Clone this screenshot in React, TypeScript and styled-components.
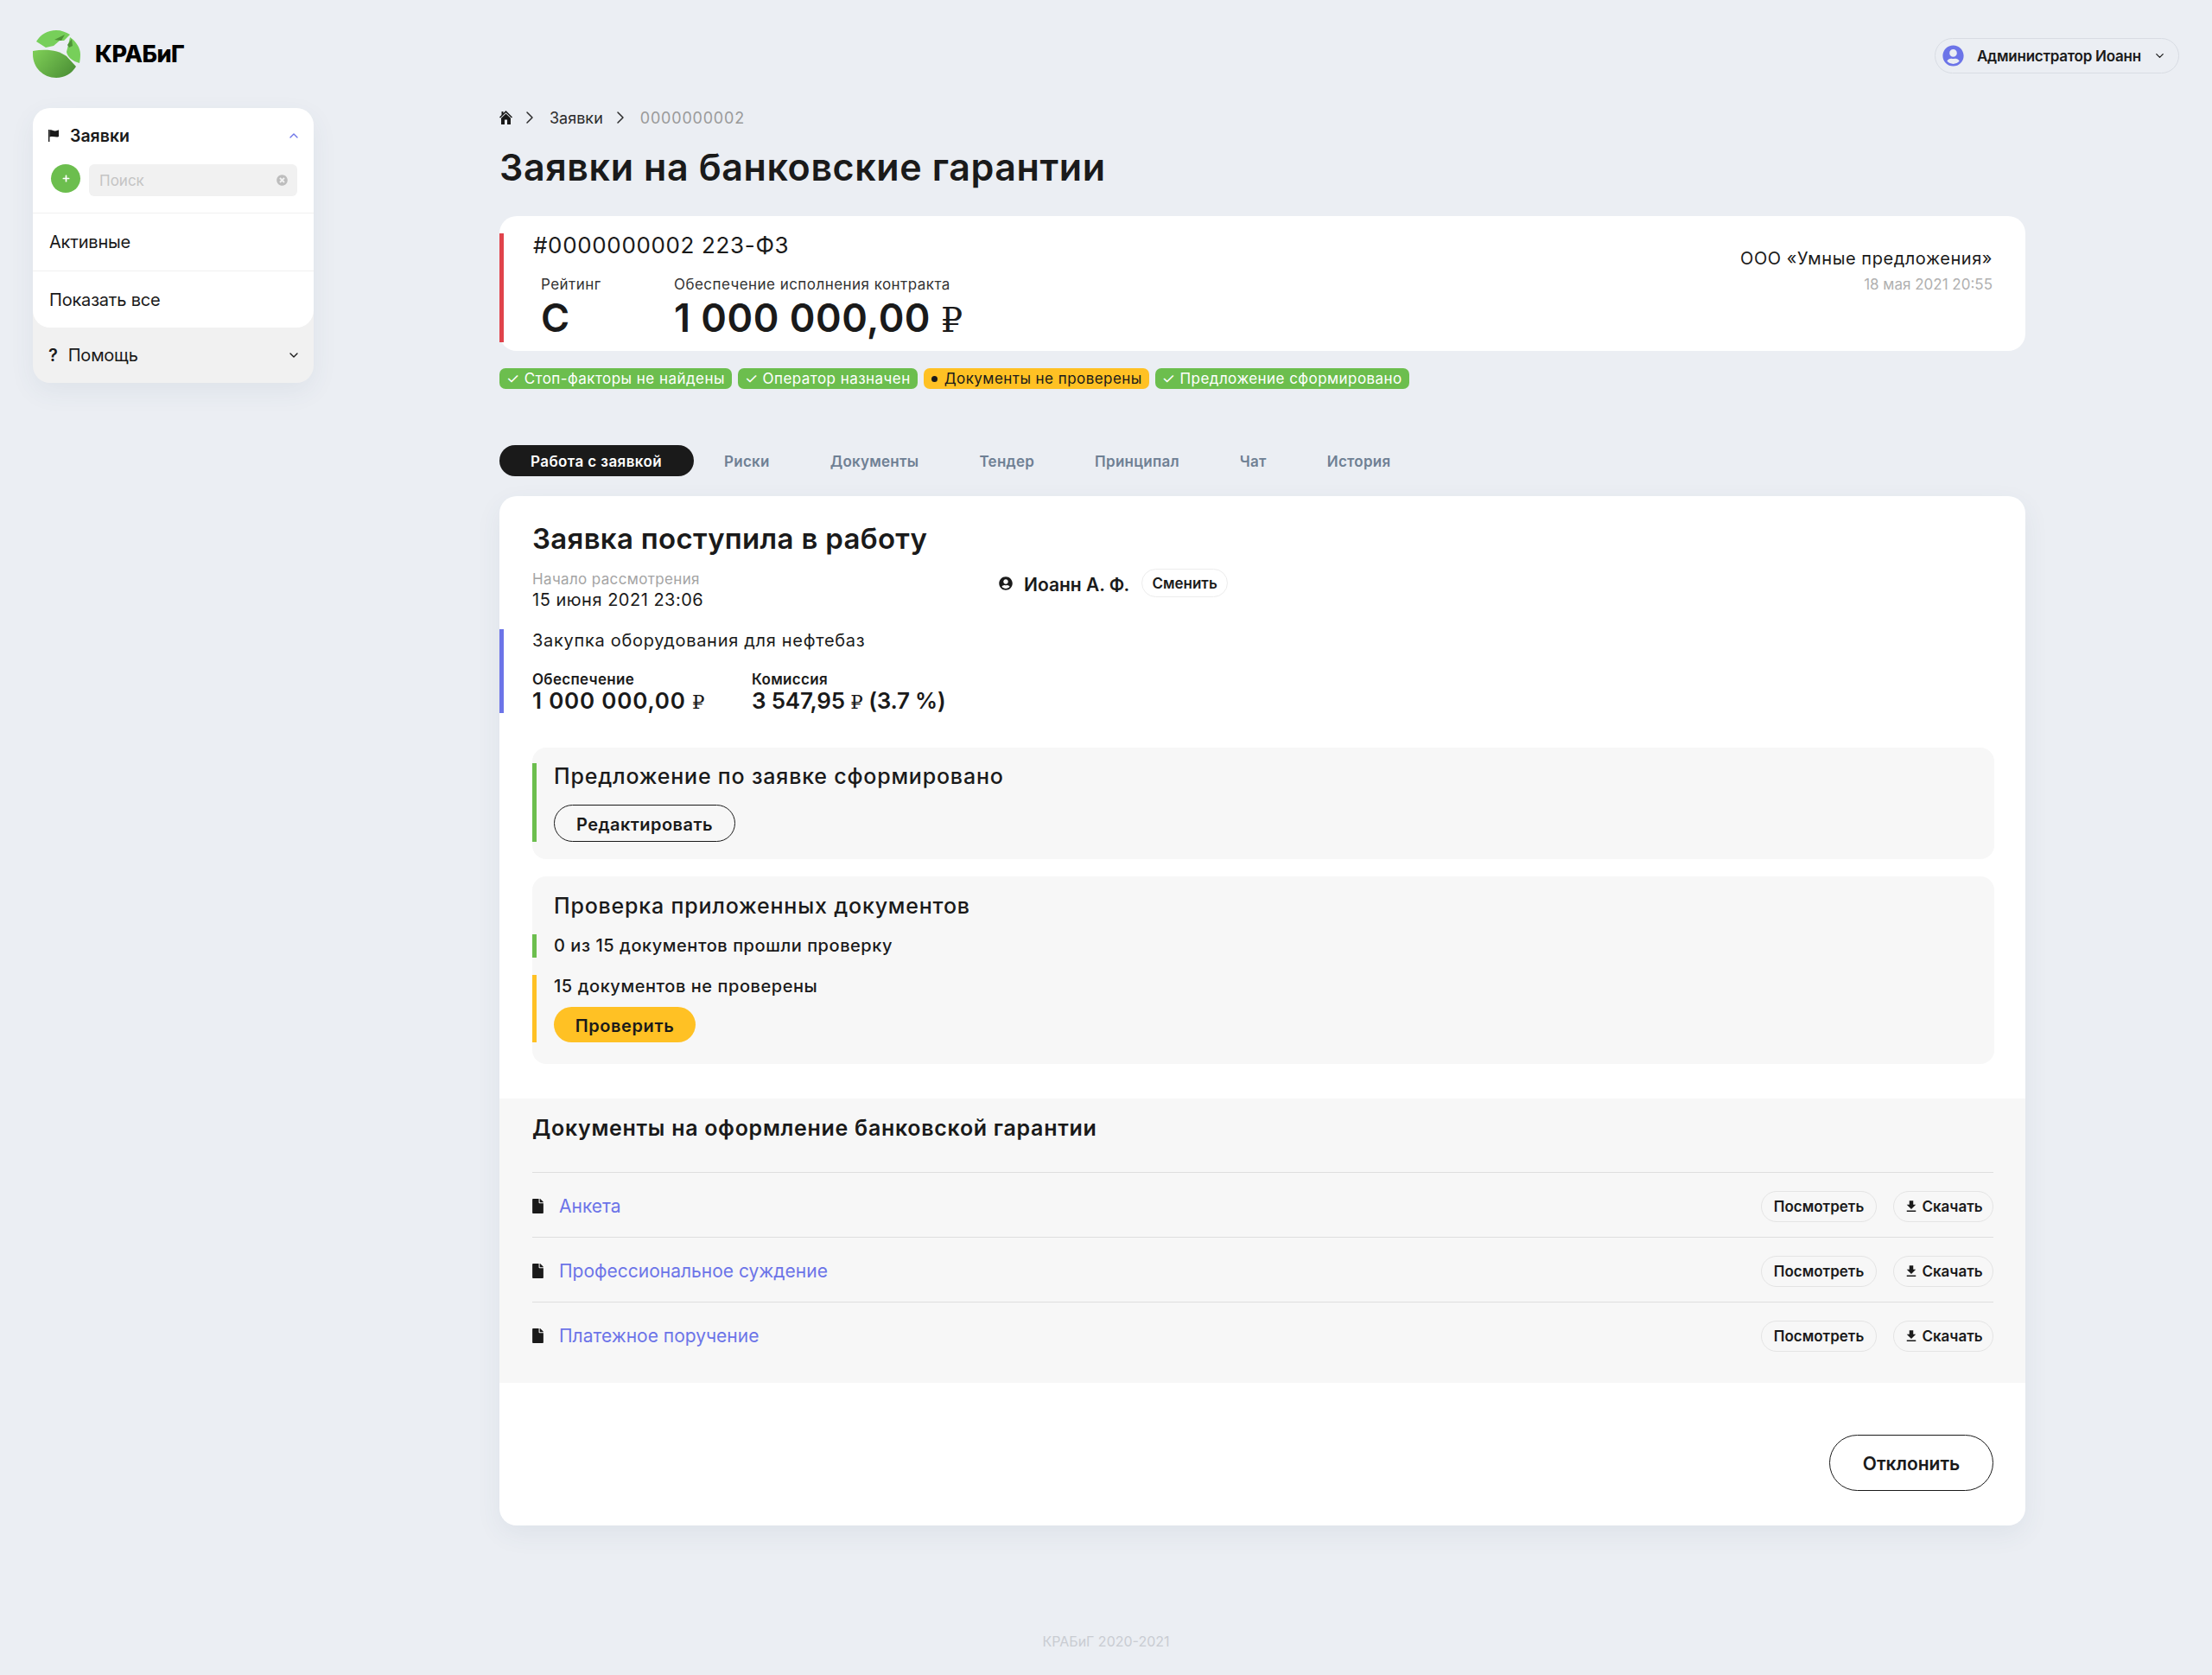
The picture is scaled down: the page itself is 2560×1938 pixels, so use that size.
import React from 'react';
import styled, { createGlobalStyle } from 'styled-components';
import { ChevronDown, ChevronRight, ChevronUp } from 'lucide-react';
import { FaFile, FaPlus, FaTimesCircle, FaUserCircle } from 'react-icons/fa';
import { MdFileDownload } from 'react-icons/md';

const Global = createGlobalStyle`
  html, body { margin: 0; padding: 0; background: #ebeef3; }
  body { font-family: Inter, "Noto Sans", sans-serif; color: #1a1a1a; }
  * { box-sizing: border-box; }
`;

const Page = styled.div`
  width: 2560px;
  height: 1938px;
  overflow: hidden;
`;
const TopBar = styled.header`
  height: 125px;
  padding: 35px 38px 0;
  display: flex;
  justify-content: space-between;
  align-items: flex-start;
`;
const Brand = styled.div`
  display: flex;
  align-items: center;
  gap: 17px;
  height: 55px;
`;
const BrandName = styled.span`
  font-size: 27px;
  font-weight: 800;
  color: #000;
  letter-spacing: -0.5px;
  margin-top: -1px;
`;
const UserPill = styled.div`
  margin-top: 9px;
  width: 283px;
  height: 41px;
  border: 1px solid #d8dce3;
  border-radius: 21px;
  display: flex;
  align-items: center;
  padding-left: 8px;
  font-size: 17px;
  font-weight: 600;
  letter-spacing: -0.25px;
  color: #1a1a1a;
  white-space: nowrap;
  svg:first-child { color: #6c74e8; margin-right: 15px; }
  svg:last-child { margin-left: 14px; }
`;
const Body = styled.div`
  display: flex;
  padding-left: 38px;
`;
const Sidebar = styled.aside`
  width: 325px;
  height: 318px;
  margin-right: 215px;
  border-radius: 20px;
  background: #f1f1f1;
  box-shadow: 0 10px 30px rgba(60, 80, 110, 0.07);
  flex-shrink: 0;
`;
const SideTop = styled.div`
  height: 254px;
  background: #fff;
  border-radius: 20px;
`;
const SideHead = styled.div`
  height: 64px;
  margin-bottom: 1px;
  padding: 0 15px 0 18px;
  display: flex;
  align-items: center;
  font-size: 19.5px;
  font-weight: 600;
  svg:first-child { margin-right: 13px; }
  span { flex: 1; }
  svg:last-child { color: #6c74e8; }
`;
const SearchRow = styled.div`
  display: flex;
  gap: 10px;
  padding: 0 19px 0 21px;
  height: 56px;
  align-items: flex-start;
`;
const AddButton = styled.div`
  width: 34px;
  height: 33px;
  border-radius: 50%;
  background: #6cbe4e;
  color: #fff;
  display: flex;
  align-items: center;
  justify-content: center;
`;
const Search = styled.div`
  width: 241px;
  height: 37px;
  border-radius: 6px;
  background: #f1f1f1;
  color: #c4c4c4;
  font-size: 17px;
  padding: 0 11px 0 12px;
  display: flex;
  align-items: center;
  justify-content: space-between;
  svg { color: #bdbdbd; }
`;
const SideItem = styled.div`
  height: 67px;
  border-top: 1px solid #f1f1f1;
  padding-left: 19px;
  display: flex;
  align-items: center;
  font-size: 20px;
  letter-spacing: -0.2px;
`;
const HelpRow = styled.div`
  height: 64px;
  padding: 0 15px 0 18px;
  display: flex;
  align-items: center;
  font-size: 20px;
  letter-spacing: -0.2px;
  b { font-weight: 600; margin-right: 12px; }
  span { flex: 1; }
`;
const Main = styled.main`
  width: 1766px;
`;
const Crumbs = styled.nav`
  height: 22px;
  display: flex;
  align-items: center;
  font-size: 18px;
  color: #2b2b2b;
  svg { flex-shrink: 0; }
`;
const CrumbSep = styled(ChevronRight)`
  margin: 0 11px 0 8px;
`;
const CrumbLast = styled.span`
  color: #9a9a9a;
  letter-spacing: 0.8px;
`;
const PageTitle = styled.h1`
  margin: 21px 0 0;
  font-size: 43px;
  line-height: 50px;
  font-weight: 600;
  letter-spacing: 0.6px;
  color: #1a1a1a;
`;
const OrderCard = styled.section`
  margin-top: 32px;
  height: 156px;
  background: #fff;
  border-radius: 20px;
  padding: 20px 38px 10px 0;
  display: flex;
  justify-content: space-between;
`;
const OrderLeft = styled.div`
  border-left: 5px solid #e0434b;
  height: 126px;
  padding-left: 34px;
`;
const OrderNo = styled.div`
  font-size: 26px;
  line-height: 28px;
  letter-spacing: 0.65px;
`;
const OrderStats = styled.div`
  display: flex;
  margin-top: 19px;
  padding-left: 9px;
`;
const Stat = styled.div<{ $w?: number }>`
  width: ${p => (p.$w ? `${p.$w}px` : 'auto')};
`;
const StatLabel = styled.div`
  font-size: 17px;
  line-height: 24px;
  letter-spacing: 0.45px;
  color: #333;
`;
const StatValue = styled.div`
  font-size: 45px;
  line-height: 54px;
  font-weight: 600;
  letter-spacing: 0.5px;
`;
const Ruble = styled.span`
  font-family: "Liberation Serif", "DejaVu Serif", serif;
  font-weight: 400;
  font-size: 0.88em;
  letter-spacing: 0;
`;
const OrderRight = styled.div`
  text-align: right;
  padding-top: 15px;
`;
const OrgName = styled.div`
  font-size: 20px;
  line-height: 28px;
  letter-spacing: 0.55px;
`;
const OrgDate = styled.div`
  font-size: 17px;
  line-height: 26px;
  color: #b0b0b0;
  margin-top: 3px;
`;
const Chips = styled.div`
  margin-top: 20px;
  display: flex;
  gap: 7px;
`;
const Chip = styled.span<{ $warn?: boolean }>`
  height: 24px;
  border-radius: 7px;
  padding: 0 8px;
  display: inline-flex;
  align-items: center;
  gap: 5px;
  font-size: 17px;
  letter-spacing: 0.45px;
  white-space: nowrap;
  color: ${p => (p.$warn ? '#1a1a1a' : '#fff')};
  background: ${p => (p.$warn ? '#ffc124' : '#6cbe4e')};
`;
const ChipDot = styled.span`
  width: 7px;
  height: 7px;
  border-radius: 50%;
  background: #1a1a1a;
  margin: 1px 3px 0 1px;
`;
const Tabs = styled.div`
  margin-top: 65px;
  height: 36px;
  display: flex;
  align-items: center;
`;
const Tab = styled.div<{ $active?: boolean }>`
  height: 36px;
  padding: ${p => (p.$active ? '1px 37px 0 36px' : '1px 35px 0')};
  border-radius: 18px;
  display: flex;
  align-items: center;
  font-size: 17px;
  font-weight: 600;
  letter-spacing: ${p => (p.$active ? '0.4px' : '0.25px')};
  color: ${p => (p.$active ? '#fff' : '#6f8094')};
  background: ${p => (p.$active ? '#1a1a1a' : 'transparent')};
`;
const WorkCard = styled.section`
  margin-top: 23px;
  height: 1191px;
  background: #fff;
  border-radius: 20px;
  box-shadow: 0 10px 30px rgba(60, 80, 110, 0.07);
  padding-top: 29px;
`;
const WorkTitle = styled.h2`
  margin: 0 0 0 38px;
  font-size: 33px;
  line-height: 40px;
  font-weight: 600;
  letter-spacing: 0.3px;
`;
const MetaRow = styled.div`
  margin: 16px 0 0 38px;
  display: flex;
  height: 47px;
`;
const MetaCol = styled.div`
  width: 540px;
`;
const MetaLabel = styled.div`
  font-size: 17px;
  line-height: 22px;
  letter-spacing: 0.35px;
  color: #a4a4a4;
`;
const MetaValue = styled.div`
  font-size: 20px;
  line-height: 26px;
  letter-spacing: 0.5px;
`;
const Assignee = styled.div`
  display: flex;
  align-items: center;
  height: 33px;
  margin-top: -1px;
  font-size: 21px;
  font-weight: 600;
  svg { margin-right: 13px; margin-top: 1px; }
`;
const AssigneeName = styled.span`
  margin-top: 3px;
`;
const SmallButton = styled.button`
  margin-left: 14px;
  height: 33px;
  width: 100px;
  padding: 0;
  border: 1px solid #ececec;
  border-radius: 17px;
  background: #fff;
  color: #1a1a1a;
  font: 600 17px Inter, sans-serif;
`;
const Purpose = styled.div`
  margin-top: 22px;
  height: 97px;
  border-left: 5px solid #6c74e8;
  padding-left: 33px;
`;
const PurposeText = styled.div`
  font-size: 20px;
  line-height: 27px;
  letter-spacing: 0.7px;
`;
const Figures = styled.div`
  display: flex;
  margin-top: 21px;
`;
const Figure = styled.div<{ $w?: number }>`
  width: ${p => (p.$w ? `${p.$w}px` : 'auto')};
`;
const FigureLabel = styled.div`
  font-size: 17px;
  line-height: 20px;
  font-weight: 600;
  letter-spacing: 0.3px;
`;
const FigureValue = styled.div<{ $tight?: boolean }>`
  font-size: 26px;
  line-height: 28px;
  font-weight: 600;
  letter-spacing: ${p => (p.$tight ? '-0.2px' : '0.8px')};
  margin-top: 1px;
`;
const Panel = styled.div<{ $h: number; $top: number; $pad?: number }>`
  margin: ${p => p.$top}px 36px 0 38px;
  height: ${p => p.$h}px;
  background: #f7f7f7;
  border-radius: 16px;
  padding-top: ${p => p.$pad ?? 0}px;
`;
const Marked = styled.div<{ $color: string; $top: number; $h: number }>`
  margin-top: ${p => p.$top}px;
  height: ${p => p.$h}px;
  border-left: 5px solid ${p => p.$color};
  padding-left: 20px;
`;
const PanelTitle = styled.div`
  font-size: 25px;
  line-height: 30px;
  font-weight: 500;
  letter-spacing: 0.8px;
`;
const PlainTitle = styled(PanelTitle)`
  padding-left: 25px;
`;
const PanelLine = styled.div`
  font-size: 20px;
  line-height: 27px;
  font-weight: 500;
  letter-spacing: 0.55px;
`;
const OutlineButton = styled.button`
  display: block;
  margin-top: 18px;
  width: 210px;
  height: 43px;
  padding: 2px 0 0;
  border: 1px solid #1a1a1a;
  border-radius: 22px;
  background: transparent;
  color: #1a1a1a;
  font: 600 20px Inter, sans-serif;
  letter-spacing: 0.45px;
`;
const YellowButton = styled.button`
  display: block;
  margin-top: 10px;
  width: 164px;
  height: 41px;
  padding: 2px 0 0;
  border: none;
  border-radius: 21px;
  background: #ffc124;
  color: #1a1a1a;
  font: 600 20px Inter, sans-serif;
  letter-spacing: 0.6px;
`;
const DocsBlock = styled.div`
  margin-top: 40px;
  height: 329px;
  background: #f7f7f7;
  padding: 16px 37px 0 38px;
`;
const DocsTitle = styled.div`
  font-size: 25px;
  line-height: 36px;
  font-weight: 600;
  letter-spacing: 0.7px;
`;
const DocList = styled.div`
  margin-top: 33px;
`;
const DocRow = styled.div`
  height: 75px;
  border-top: 1px solid #dedede;
  padding-top: 3px;
  display: flex;
  align-items: center;
`;
const DocIcon = styled(FaFile)`
  width: 13px;
  height: 17px;
  margin-top: -1px;
`;
const DocLink = styled.a`
  flex: 1;
  margin-left: 18px;
  font-size: 21px;
  color: #6c74e8;
`;
const PillButton = styled.button<{ $w: number }>`
  width: ${p => p.$w}px;
  height: 36px;
  margin-left: 19px;
  padding: 0;
  border: 1px solid #e4e4e4;
  border-radius: 18px;
  background: transparent;
  color: #1a1a1a;
  font: 600 17px Inter, sans-serif;
  display: inline-flex;
  align-items: center;
  justify-content: center;
  gap: 3px;
`;
const CardActions = styled.div`
  margin: 60px 37px 0 0;
  display: flex;
  justify-content: flex-end;
`;
const DeclineButton = styled.button`
  width: 190px;
  height: 65px;
  padding: 2px 0 0;
  border: 1px solid #1a1a1a;
  border-radius: 33px;
  background: #fff;
  color: #1a1a1a;
  font: 600 21px Inter, sans-serif;
`;
const Footer = styled.footer`
  margin-top: 124px;
  text-align: center;
  font-size: 16px;
  line-height: 20px;
  color: #c9ccd2;
`;

function Logo() {
  return (
    <svg width="55" height="55" viewBox="0 0 55 55">
      <defs>
        <linearGradient id="leaf" x1="0" y1="0.2" x2="1" y2="0.8">
          <stop offset="0" stopColor="#7ccb55" />
          <stop offset="1" stopColor="#4b8f35" />
        </linearGradient>
      </defs>
      <path d="M4 13C9 5 17 0 27 0C33 0 38 2 43 5L36 12L31 12L24 18L15 20Z" fill="#77cf5a" />
      <path d="M43 8C50 13 55 20 55 28C55 32 54.500 35 54 38C46 36 40 31 39 25L41 17Z" fill="#77cf5a" />
      <path d="M0 24C15 21 30 23 39 30L50 42C45 50 37 55 27 55C12 55 0 43 0 28Z" fill="url(#leaf)" />
      <path d="M25 11L37 5L33 12Z" fill="#4f9338" />
      <path d="M40 17L45 10L46 18L42 20Z" fill="#4f9338" />
    </svg>
  );
}

function FlagIcon() {
  return (
    <svg width="12" height="14" viewBox="0 0 12 14" fill="#1a1a1a">
      <rect x="0" y="0" width="1.400" height="14" />
      <path d="M1.400 0.500C4 -0.500 6 2 8 1.500C9.500 1.200 11 0.500 12 0.500V8C9 9.500 6 7 1.400 8.500Z" />
    </svg>
  );
}

function HomeIcon() {
  return (
    <svg width="15" height="16" viewBox="0 0 15 16" fill="#1a1a1a">
      <path d="M7.500 0L15 7.500L14 8.500L7.500 2.200L1 8.500L0 7.500L2.500 5V1H4.500V3Z" />
      <path d="M7.500 3.600L13 8.800V16H9V10.500H6V16H2V8.800Z" />
    </svg>
  );
}

const docs = ['Анкета', 'Профессиональное суждение', 'Платежное поручение'];
const tabs = ['Работа с заявкой', 'Риски', 'Документы', 'Тендер', 'Принципал', 'Чат', 'История'];

export default function App() {
  return (
    <Page>
      <Global />
      <TopBar>
        <Brand>
          <Logo />
          <BrandName>КРАБиГ</BrandName>
        </Brand>
        <UserPill>
          <FaUserCircle size={25} />
          Администратор Иоанн
          <ChevronDown size={15} />
        </UserPill>
      </TopBar>
      <Body>
        <Sidebar>
          <SideTop>
            <SideHead>
              <FlagIcon />
              <span>Заявки</span>
              <ChevronUp size={16} />
            </SideHead>
            <SearchRow>
              <AddButton><FaPlus size={9} /></AddButton>
              <Search>Поиск<FaTimesCircle size={13} /></Search>
            </SearchRow>
            <SideItem>Активные</SideItem>
            <SideItem>Показать все</SideItem>
          </SideTop>
          <HelpRow>
            <b>?</b>
            <span>Помощь</span>
            <ChevronDown size={16} />
          </HelpRow>
        </Sidebar>
        <Main>
          <Crumbs>
            <HomeIcon />
            <CrumbSep size={24} strokeWidth={1.5} />
            Заявки
            <CrumbSep size={24} strokeWidth={1.5} />
            <CrumbLast>0000000002</CrumbLast>
          </Crumbs>
          <PageTitle>Заявки на банковские гарантии</PageTitle>
          <OrderCard>
            <OrderLeft>
              <OrderNo>#0000000002 223-ФЗ</OrderNo>
              <OrderStats>
                <Stat $w={154}>
                  <StatLabel>Рейтинг</StatLabel>
                  <StatValue>C</StatValue>
                </Stat>
                <Stat>
                  <StatLabel>Обеспечение исполнения контракта</StatLabel>
                  <StatValue>1 000 000,00 <Ruble>₽</Ruble></StatValue>
                </Stat>
              </OrderStats>
            </OrderLeft>
            <OrderRight>
              <OrgName>ООО «Умные предложения»</OrgName>
              <OrgDate>18 мая 2021 20:55</OrgDate>
            </OrderRight>
          </OrderCard>
          <Chips>
            <Chip>✓ Стоп-факторы не найдены</Chip>
            <Chip>✓ Оператор назначен</Chip>
            <Chip $warn><ChipDot />Документы не проверены</Chip>
            <Chip>✓ Предложение сформировано</Chip>
          </Chips>
          <Tabs>
            {tabs.map((t, i) => <Tab key={t} $active={i === 0}>{t}</Tab>)}
          </Tabs>
          <WorkCard>
            <WorkTitle>Заявка поступила в работу</WorkTitle>
            <MetaRow>
              <MetaCol>
                <MetaLabel>Начало рассмотрения</MetaLabel>
                <MetaValue>15 июня 2021 23:06</MetaValue>
              </MetaCol>
              <Assignee>
                <FaUserCircle size={16} />
                <AssigneeName>Иоанн А. Ф.</AssigneeName>
                <SmallButton>Сменить</SmallButton>
              </Assignee>
            </MetaRow>
            <Purpose>
              <PurposeText>Закупка оборудования для нефтебаз</PurposeText>
              <Figures>
                <Figure $w={254}>
                  <FigureLabel>Обеспечение</FigureLabel>
                  <FigureValue>1 000 000,00 <Ruble>₽</Ruble></FigureValue>
                </Figure>
                <Figure>
                  <FigureLabel>Комиссия</FigureLabel>
                  <FigureValue $tight>3 547,95 <Ruble>₽</Ruble> (3.7 %)</FigureValue>
                </Figure>
              </Figures>
            </Purpose>
            <Panel $top={40} $h={129} $pad={18}>
              <Marked $color="#6cbe4e" $top={0} $h={91}>
                <PanelTitle>Предложение по заявке сформировано</PanelTitle>
                <OutlineButton>Редактировать</OutlineButton>
              </Marked>
            </Panel>
            <Panel $top={20} $h={217} $pad={19}>
              <PlainTitle>Проверка приложенных документов</PlainTitle>
              <Marked $color="#6cbe4e" $top={18} $h={27}>
                <PanelLine>0 из 15 документов прошли проверку</PanelLine>
              </Marked>
              <Marked $color="#ffc124" $top={20} $h={78}>
                <PanelLine>15 документов не проверены</PanelLine>
                <YellowButton>Проверить</YellowButton>
              </Marked>
            </Panel>
            <DocsBlock>
              <DocsTitle>Документы на оформление банковской гарантии</DocsTitle>
              <DocList>
                {docs.map(d => (
                  <DocRow key={d}>
                    <DocIcon />
                    <DocLink>{d}</DocLink>
                    <PillButton $w={134}>Посмотреть</PillButton>
                    <PillButton $w={116}><MdFileDownload size={18} />Скачать</PillButton>
                  </DocRow>
                ))}
              </DocList>
            </DocsBlock>
            <CardActions>
              <DeclineButton>Отклонить</DeclineButton>
            </CardActions>
          </WorkCard>
        </Main>
      </Body>
      <Footer>КРАБиГ 2020-2021</Footer>
    </Page>
  );
}
